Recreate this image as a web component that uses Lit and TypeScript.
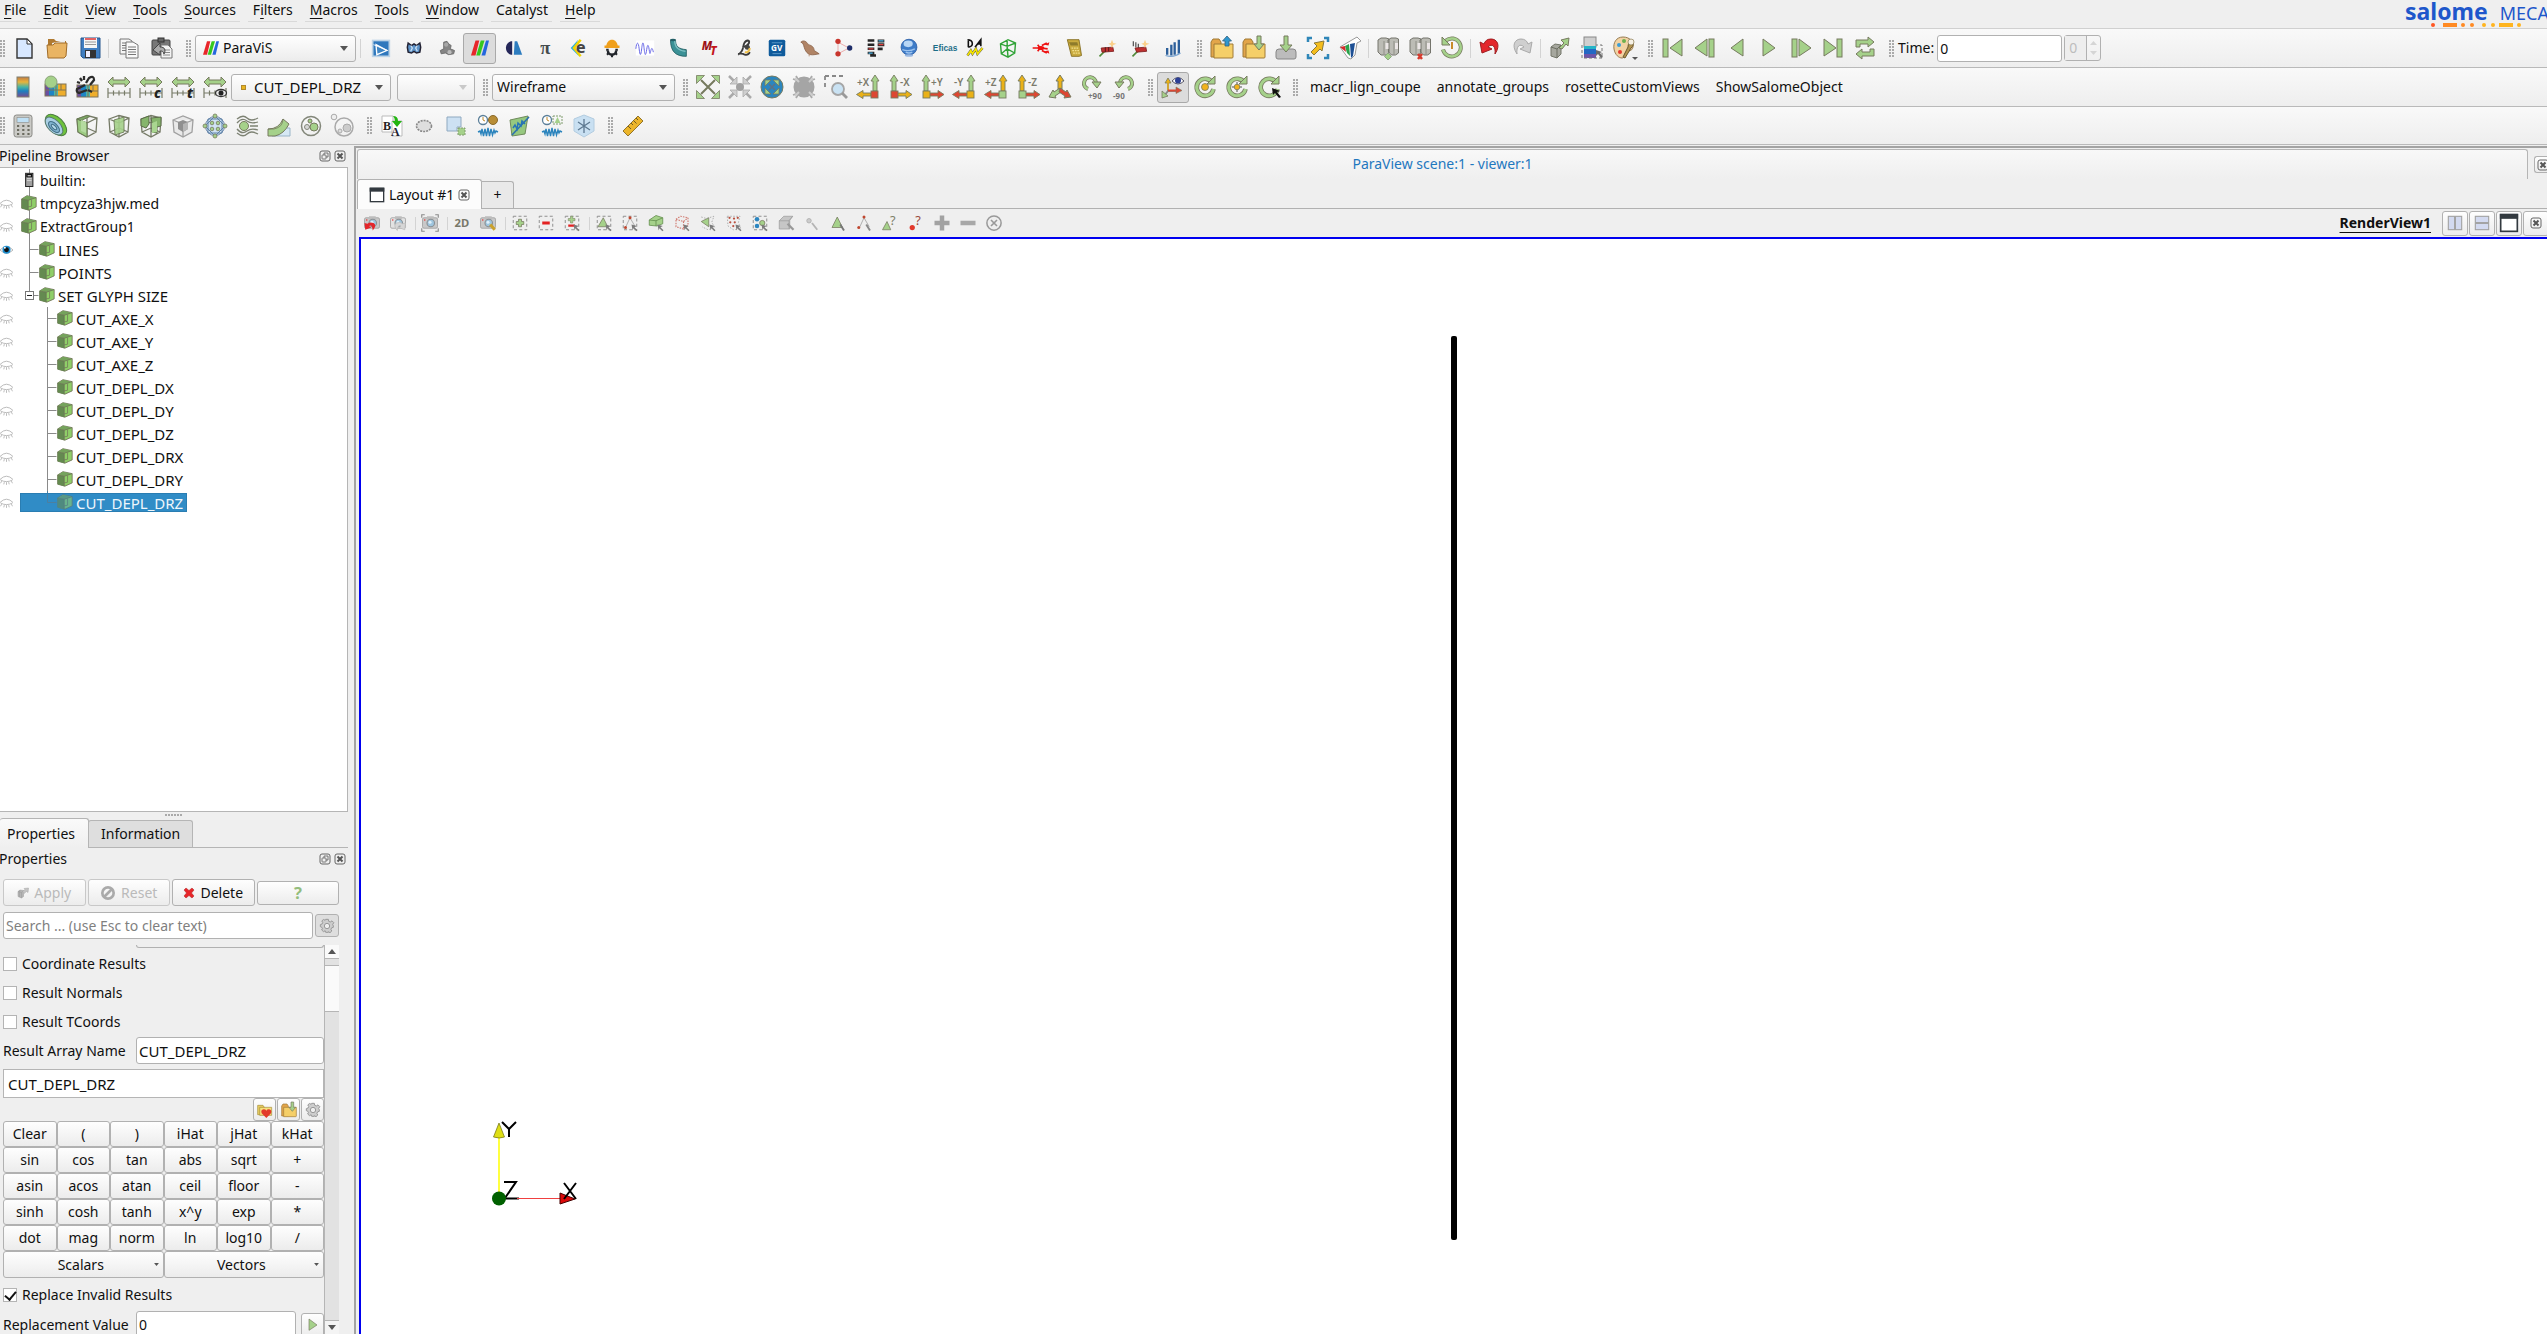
import { LitElement, html, css, svg, nothing } from "lit";
import { customElement } from "lit/decorators.js";
import { classMap } from "lit/directives/class-map.js";

const G = "#a5d18a";
const K = "#767a5f";

/* ---------- shared fragments ---------- */
const dash = svg`<rect x="3" y="3" width="18" height="18" fill="none" stroke="#8d8d8d" stroke-width="1.3" stroke-dasharray="4 3"/>`;
const cursor = svg`<path d="M14 14l7 2-3 1.500 4 4-1.500 1.500-4-4-1 3z" fill="#7b7b7b"/>`;
const arrowRow = svg`<path d="M1 7l5-5v3h12V2l5 5-5 5V9H6v3z" fill="${G}" stroke="${K}"/><path d="M1 13v10M6.500 15.500v5M12 15.500v5M17.500 15.500v5M23 13v10M1 18h22" stroke="#777b68" fill="none" stroke-width="1.200"/>`;
const wave = svg`<path d="M2 18l2-1 1 3 1-5 1.500 7L9 15l1.500 7L12 14l1.500 8L15 15l1.500 6L18 16l1 3 1-2 2 1" fill="none" stroke="#2b84bd" stroke-width="1.400"/>`;
const clock = svg`<circle cx="7" cy="6" r="4.500" fill="#fff" stroke="#5b7f99" stroke-width="1.300"/><path d="M7 3v3l2 1" stroke="#c08a2b" fill="none"/>`;
const boxWire = svg`<path d="M2 5l10-3.500L22 4l-1 14-9 5-9-5zM2 5l10 4 10-5M12 9v14M12 1.500V14M12 14l-9 4M12 14l9 4" fill="none" stroke="#757a66" stroke-width="1.300"/>`;
const camera = (c: string) => svg`<rect x="2" y="5" width="20" height="14" rx="2" fill="${c}" stroke="#9a9a9a"/><rect x="8" y="3" width="9" height="4" fill="#bdbdbd"/><circle cx="13" cy="12" r="5" fill="#9fc6df" stroke="#8a8f93" stroke-width="1.500"/><circle cx="12" cy="11" r="2" fill="#dff0fa"/><circle cx="5" cy="8" r="1" fill="#e33"/>`;
const servers = svg`<path d="M2 4l3-2h5l3 1v14l-3 2H5l-3-3zM12 4l3-2h5l2.500 1v14l-3 2h-4l-3-3z" fill="#bcbcb5" stroke="#74746c"/><path d="M8 5v13M18 5v13" stroke="#8e8e86"/><path d="M9.500 7h3v6h-3zM19 7h3v6h-3z" fill="#ece7e7"/>`;
const lutFace = (y: number) => svg`<path d="M2 ${y}h7v12H2z" fill="#6b4fa0"/><path d="M6 ${y}h6v12H6z" fill="#1e84c4"/><path d="M11 ${y}h4v12h-4z" fill="#4fb6a8"/><path d="M15 ${y}h8v12h-8z" fill="#efae2c"/><rect x="2" y="${y}" width="21" height="12" fill="none" stroke="#7f7357"/><path d="M2 ${y + 6}h21M13 ${y}v12M18 ${y}v6" stroke="#7f7357" fill="none"/>`;
const axis = (label: string, x: number, up: string, side: string, corner: string, left: boolean) => {
  const ux = left ? 19 : 6;
  return svg`<text x="${x}" y="11" font-size="10" font-weight="600" fill="#7b7a6b">${label}</text>
  <path d="M${ux - 2} 16V6h-2l4-6 4 6h-2v10z" fill="${up}" stroke="${K}" stroke-width=".9"/>
  <path d="${left ? "M15 18H7v-2.500l-6.500 4 6.500 4V21h8z" : "M9 18h9v-2.500l6 4-6 4V21H9z"}" fill="${side}" stroke="${K}" stroke-width=".9"/>
  <rect x="${left ? 15 : 3}" y="16" width="7" height="7" fill="${corner}" stroke="${K}" stroke-width=".9"/>`;
};
const RED = "#dd4632", YEL = "#eab117";
const ring = svg`<path d="M19.500 8a8.500 8.500 0 1 0 1 6" fill="none" stroke="${K}" stroke-width="4.600"/><path d="M19.500 8a8.500 8.500 0 1 0 1 6" fill="none" stroke="${G}" stroke-width="3"/><path d="M14 9h8V1z" fill="${G}" stroke="${K}"/>`;
const folder = svg`<path d="M1 6l2-3h6l2 3v15H1z" fill="#e2a54a" stroke="#a07a36"/><path d="M4 8h19v13q0 1-1 1H4z" fill="#f5cf68" stroke="#a07a36"/>`;
const gearPath = "M10 2h4l.6 3 2.300 1 2.600-1.700 2.700 2.700L20.500 9.600l1 2.300V14l-2.500.7-1.200 2.300 1.400 2.500-2.700 2.500-2.500-1.400L14 21.500h-4l-.8-2.400L6.800 20.500 4 18l1.200-2.600L4.300 14 2 13v-3l2.600-1 1-2.200L4.200 4.400 6.800 2.200l2.400 1.300z";

const icons: Record<string, unknown> = {
  newDoc: svg`<path d="M5 3h10l5 5v14H5z" fill="#d8e8ff" stroke="#333" stroke-width="1.400"/><path d="M15 3v5h5z" fill="#fff" stroke="#333"/>`,
  open: svg`<path d="M3 3h6l2 2h10v6H3z" fill="#b07a31"/><path d="M7 7l13-3v5H7z" fill="#eee"/><path d="M2 9h6l2-2h12l-1 13-2 2H3z" fill="#e9b463" stroke="#a06d2a"/>`,
  save: svg`<path d="M3 2h19v20H5l-2-2z" fill="#3f7dc0" stroke="#27568e"/><rect x="6" y="2" width="13" height="10" fill="#f5f5f5"/><path d="M7 3h11" stroke="#d33" stroke-width="1.500"/><path d="M7 6h11M7 8.500h11" stroke="#999"/><rect x="7" y="14" width="11" height="8" fill="#333"/><rect x="8" y="15" width="4" height="6" fill="#eef"/>`,
  copy: svg`<path d="M3 3h9l3 2v13H3z" fill="#f6f6f6" stroke="#777"/><path d="M5 7h5M5 9.500h5M5 12h5M5 14.500h5" stroke="#777"/><path d="M9 6h7l5 3v13H9z" fill="#f9f9f9" stroke="#777"/><path d="M11 11h8M11 13.500h8M11 16h8M11 18.500h8" stroke="#777"/>`,
  paste: svg`<rect x="2" y="4" width="18" height="15" rx="1" fill="#777" stroke="#444"/><rect x="8" y="2" width="6" height="4" fill="#666" stroke="#333"/><path d="M11 9h7l4 4v9H11z" fill="#f3f3f3" stroke="#777"/><path d="M13 14h7M13 16.500h7M13 19h7" stroke="#888"/><path d="M3 14l7-7v4c5 0 6 3 4 7-1-3-2-3-4-3v4z" fill="#aaa" stroke="#444"/>`,
  paravis: svg`<path d="M6 2h5L6 22H0z" fill="#e8262a"/><path d="M13 2h5l-6 20H7z" fill="#35c81e"/><path d="M20 2h4l-5 20h-5z" fill="#2467dd"/>`,
  geom: svg`<rect x="2" y="3" width="20" height="19" fill="#2f78bd" stroke="#bcd3e6" stroke-width="2"/><path d="M6 8l13 7-12 5z" fill="#3f86c4" stroke="#fff" stroke-width="1.600"/><path d="M3 8l17 7" stroke="#fff"/>`,
  butterfly: svg`<path d="M5 6l4 3 3-2 3 2 4-3 1 5-1 6-4 1-3-2-3 2-4-1-1-6z" fill="#5d93c8" stroke="#223" stroke-width="1.800"/><path d="M8 9l2 3-2 4M16 9l-2 3 2 4" stroke="#cfe3f5" fill="none" stroke-width="1.500"/>`,
  mesh: svg`<path d="M8 5l4-1 2 3 3 2-1 4 5 2-1 4-6 1-4-2-5 1-1-4 4-2z" fill="#858585" stroke="#666"/><circle cx="11" cy="8" r="2.500" fill="#a7a7a7"/><circle cx="15" cy="17" r="2.500" fill="#bcbcbc"/>`,
  med: svg`<path d="M11 4v16C1 20 1 4 11 4z" fill="#252759"/><path d="M14 4h3l6 16H13z" fill="#2d7cbf"/>`,
  pi: svg`<text x="5" y="19" font-size="22" font-weight="700" font-family="Liberation Serif, serif" fill="#454b4d">π</text>`,
  eCode: svg`<path d="M11 2L2 12l10 10-5-10z" fill="#29aee0"/><path d="M14 2L6 12l8 10" stroke="#f2d400" stroke-width="3" fill="none"/><text x="8" y="18" font-size="20" font-weight="700" fill="#444">e</text>`,
  helmet: svg`<path d="M5 11C5-1 19-1 19 11z" fill="#f0a01c"/><rect x="3" y="9" width="18" height="3" fill="#f0a01c"/><path d="M7 15a5 5 0 0 0 10 0" fill="none" stroke="#22252b" stroke-width="3"/><path d="M5 14h3M16 14h3M12 19v4M6 20l2-2M18 20l-2-2" stroke="#22252b" stroke-width="2.500"/>`,
  signal: svg`<rect x="1" y="3" width="22" height="18" fill="#fff"/><path d="M1 13c1-9 3-9 4 0s2 9 3 0 2-10 3 0 2 8 3 1 2-7 3 0 1 5 2 1 2-3 3 2" fill="none" stroke="#6b6be8" stroke-width="1.200"/>`,
  pipe: svg`<path d="M3 2h6c0 8 3 11 13 12v8C9 22 3 16 3 2z" fill="#3b9196" stroke="#1f5c60"/><path d="M8 3c0 8 4 12 13 13" stroke="#7fc0c2" stroke-width="1.500" fill="none"/><ellipse cx="6" cy="2.500" rx="3" ry="1.500" fill="#245f66"/>`,
  mt: svg`<text x="1" y="14" font-size="14" font-weight="800" font-style="italic" fill="#9d1217">M</text><text x="11" y="20" font-size="14" font-weight="800" font-style="italic" fill="#c4161c">T</text>`,
  lCode: svg`<path d="M5 20q5-3 6-9 1-7 5-8 3 0 2 3-2 4-8 5M5 19q5-1 8 1 4 1 6-3" fill="none" stroke="#3b3b3b" stroke-width="2.200"/><circle cx="16" cy="11" r="3" fill="#444"/><path d="M13 17q5 1 6-5" stroke="#efc04a" stroke-width="2.500" fill="none"/>`,
  gv: svg`<rect x="1" y="1" width="22" height="22" rx="2" fill="#0f5b9c"/><text x="4" y="16" font-size="11" font-weight="700" fill="#fff">GV</text><path d="M5 5h14M6 19.500h12" stroke="#6ea7d3"/>`,
  bird: svg`<path d="M1 5c3-3 7-1 9 3 5 1 7 4 7 7l6 4-6 1c-6 1-10-2-12-9-1-3-1-5-4-6z" fill="#b08466" stroke="#8b644a"/><path d="M11 18v4" stroke="#b08466"/>`,
  graph: svg`<path d="M6 5v14M6 5l13 7L6 19" stroke="#e8a0a0" fill="none"/><circle cx="6" cy="4" r="3.200" fill="#c8352c"/><circle cx="6" cy="19" r="3.200" fill="#c8352c"/><circle cx="20" cy="12" r="3.200" fill="#1d2d69"/>`,
  yacs: svg`<path d="M2 3h8M2 8h8M2 13h8M2 18h8M5 21h7" stroke="#262626" stroke-width="3"/><path d="M14 3.500h8M14 8h8M14 13h6" stroke="#262626" stroke-width="3.500"/><path d="M15 3.500h6M3 18h5" stroke="#4cb4e8" stroke-width="1.500"/><path d="M15 8h6M3 13h6" stroke="#e04040" stroke-width="1.500"/>`,
  globe: svg`<circle cx="12" cy="11" r="9.500" fill="#3e7cc8" stroke="#2b5ea6"/><ellipse cx="11" cy="7" rx="5.500" ry="4" fill="#b8d6f5"/><path d="M4 14q8 3 15-1M8 17q4 2 8 0" stroke="#9cc3ee" fill="none" stroke-width="1.500"/><ellipse cx="12" cy="21" rx="5" ry="1.500" fill="#9ab9e2"/>`,
  eficas: svg`<text x="1" y="16" font-size="10" font-weight="700" font-family="Liberation Sans Narrow, sans-serif" fill="#1d6e88">Eficas</text>`,
  da: svg`<path d="M3 2c7 0 8 8 1 9M4 2v9M12 11l7-9v8M15 7h4" fill="none" stroke="#111" stroke-width="1.900"/><path d="M3 21l4-6 2 4 4-6 2 6 6-7" stroke="#555" stroke-width="3" fill="none"/><path d="M3 21l4-6 2 4 4-6 2 6 6-7" stroke="#f5e500" stroke-width="2" fill="none"/>`,
  cube: svg`<path d="M3 7l9-5 9 4-1 12-8 5-8-4zM3 7l8 3 10-4M11 10l1 13M4 19l7-6 9 5M11 2v11" fill="none" stroke="#2fa336" stroke-width="1.700"/>`,
  lobster: svg`<path d="M2 12h10l8 1M13 9l6-3M13 15l6 3M8 8l3 4-3 4" stroke="#ee1111" stroke-width="2" fill="none"/><ellipse cx="12" cy="12" rx="4" ry="2.500" fill="#ee1111"/><path d="M16 8l6-3-1 4zM16 16l6 3-1-4z" fill="#ee1111"/>`,
  goldCalc: svg`<path d="M4 2h14l3 19-3 1H9z" fill="#c9ab3f" stroke="#806818"/><path d="M6 5h10l1 4H8z" fill="#8e7b2b"/><path d="M9 12h9M10 15h9M11 18h8" stroke="#f2e08c" stroke-width="1.500" stroke-dasharray="2 1"/>`,
  hammer: svg`<path d="M3 22l6-6" stroke="#4f8a3a" stroke-width="2"/><path d="M5 12l14-1 1 5-14 1z" fill="#be3030" stroke="#7d1e1e"/><path d="M10 11v6M14 11v5" stroke="#421515"/><path d="M18 2l1.500 4 4 1-4 1.500L18 12l-1.500-3.500-3-1.500 3-1z" fill="#fbd08a"/>`,
  hammer2: svg`<path d="M3 22l6-6" stroke="#4f8a3a" stroke-width="2"/><path d="M4 4v6M7 5v6M10 7v6" stroke="#555" stroke-width="1.500"/><path d="M6 12l13-1 1 5-12 1z" fill="#be3030" stroke="#7d1e1e"/><path d="M18 2l1.500 4 4 1-4 1.500L18 12l-1.500-3.500-3-1.500 3-1z" fill="#fbd08a"/>`,
  bars: svg`<path d="M5 12v8M10 8v13M14 5v15M19 2v17" stroke="#2c5f9a" stroke-width="2.800"/><path d="M3 21q10 3 18-3" stroke="#7aa4d0" fill="none" stroke-width="1.500"/>`,
  folderUp: svg`${folder}<path d="M17 0l4.500 5H19v5h-4V5h-2.500z" fill="#2f97cf" stroke="#33617e" stroke-width=".8"/>`,
  folderDown: svg`${folder}<path d="M15 0h4v8h3l-5 6-5-6h3z" fill="${G}" stroke="${K}"/>`,
  tray: svg`<path d="M2 16q0-3 3-3h14q3 0 3 3v5q0 2-2 2H4q-2 0-2-2z" fill="#bcbcbc" stroke="#868686"/><path d="M10 0h4v9h4l-6 7-6-7h4z" fill="${G}" stroke="${K}"/>`,
  expand: svg`<path d="M2 6V2h4M18 2h4v4M22 18v4h-4M6 22H2v-4" fill="none" stroke="#2f86b8" stroke-width="2.500"/><path d="M5 16l6-6-3-3 10-2-2 10-2-2-6 6z" fill="#f4bd1d" stroke="#8b7a3c"/>`,
  flask: svg`<path d="M2 11L19 1l4 4-4 2-2 12-4 4-3-1z" fill="#fff" stroke="#999"/><path d="M2 11l5-1 1 6z" fill="#d42a2a"/><path d="M7 10l4-2 1 12-3-3z" fill="#2aa14a"/><path d="M12 8l5-1-2 13-2 2z" fill="#1d4f94"/>`,
  connect: svg`${servers}<path d="M12 17l3.500 3.500L12 24l-3.500-3.500z" fill="${G}" stroke="#8ea883"/>`,
  disconnect: svg`${servers}<path d="M10 18l4 5M14 18l-4 5" stroke="#d63a2d" stroke-width="2.500"/>`,
  timeReset: svg`<path d="M6 4.500a9 9 0 1 1-3 9" fill="none" stroke="${K}" stroke-width="4"/><path d="M6 4.500a9 9 0 1 1-3 9" fill="none" stroke="${G}" stroke-width="2.500"/><path d="M2 1v8h8z" fill="${G}" stroke="${K}"/><path d="M12 6v7" stroke="#c98a2a" stroke-width="2"/>`,
  undo: svg`<path d="M2 6l2 11 10-4-4-2c4-4 8-1 7 7 6-9 2-15-4-15-4 0-6 2-7 5z" fill="#e3262b" stroke="#9f1d20"/>`,
  redo: svg`<path d="M22 6l-2 11-10-4 4-2c-4-4-8-1-7 7C1 9 5 3 11 3c4 0 6 2 7 5z" fill="#cfcfcf" stroke="#aaa"/>`,
  extract: svg`<path d="M3 11l4-3 6 1v9l-4 4-6-2z" fill="#a6a79e" stroke="#74776a"/><path d="M3 11l6 2v9M9 13l4-4" fill="none" stroke="#6c6f63"/><path d="M11 12l5-5-3-3 8-2-1 8-2-2-4 5z" fill="${G}" stroke="${K}"/>`,
  colorPick: svg`<rect x="4" y="1" width="12" height="10" fill="#cfcfcf" stroke="#888"/><rect x="4" y="10" width="12" height="4" fill="#25b4c6"/><rect x="4" y="13" width="12" height="5" fill="#2368c4"/><rect x="4" y="18" width="12" height="4" fill="#6d55a8"/><path d="M2 9v13h20V9H16" stroke="#777" stroke-dasharray="3 2" fill="none"/><path d="M16 14l6 2-2 1 3 4-2 1-3-4-2 2z" fill="#6b6b6b"/>`,
  palette: svg`<path d="M11 1C4 1 1 7 2 13s5 9 8 9 2-4 4-6 6 0 7-5S18 1 11 1z" fill="#f2d3a4" stroke="#957b52"/><circle cx="7" cy="9" r="2" fill="#3c9ed6"/><circle cx="12" cy="5" r="2" fill="#6db04e"/><circle cx="8" cy="16" r="2" fill="#e4392d"/><path d="M20 5q3 4-1 7l-6 10-2-1 5-10q-1-4 4-6z" fill="#b3934f" stroke="#6d5a30"/><circle cx="19" cy="6" r="3" fill="#f6f1e5" stroke="#8b7a50" stroke-width=".7"/><path d="M20 21h6l-3 3z" fill="#555"/>`,
  first: svg`<rect x="2" y="3" width="5" height="18" fill="${G}" stroke="${K}"/><path d="M21 3v17L9 12z" fill="${G}" stroke="${K}"/>`,
  prev: svg`<path d="M14 3v17L2 12z" fill="${G}" stroke="${K}"/><rect x="16" y="3" width="5" height="18" fill="${G}" stroke="${K}"/>`,
  back: svg`<path d="M18 3v17L6 12z" fill="${G}" stroke="${K}"/>`,
  play: svg`<path d="M6 3v17l12-8z" fill="${G}" stroke="${K}"/>`,
  next: svg`<rect x="3" y="3" width="5" height="18" fill="${G}" stroke="${K}"/><path d="M10 3v17l12-8z" fill="${G}" stroke="${K}"/>`,
  last: svg`<path d="M3 3v17l12-8z" fill="${G}" stroke="${K}"/><rect x="16" y="3" width="5" height="18" fill="${G}" stroke="${K}"/>`,
  loop: svg`<path d="M3 11V4h12V1l6 5-6 5V8H7v3zM21 13v7H9v3l-6-5 6-5v3h8v-3z" fill="${G}" stroke="${K}"/>`,
  lut: svg`<defs><linearGradient id="lut" x2="0" y2="1"><stop offset="0" stop-color="#c07a45"/><stop offset=".25" stop-color="#e8b43a"/><stop offset=".5" stop-color="#45b5a5"/><stop offset=".7" stop-color="#1c7fc0"/><stop offset="1" stop-color="#7a4b90"/></linearGradient></defs><rect x="6" y="2" width="12" height="20" fill="url(#lut)" stroke="#7f8070"/>`,
  lutEdit: svg`${lutFace(9)}<circle cx="8" cy="7" r="6" fill="${G}" stroke="#8aa378"/>`,
  lutSep: svg`${lutFace(10)}<path d="M11 8l3-5q5-3 5 2l-4 5M10 10l-8 4q-1 3 2 4l8-3M5 3l2 3M2 7l3 1M9 1v4M13 15l4 2" stroke="#2b2b2b" fill="none" stroke-width="2.300"/>`,
  range: arrowRow,
  rangeC: svg`${arrowRow}<text x="15" y="23" font-size="14" font-weight="800" font-style="italic" fill="#222">c</text>`,
  rangeT: svg`${arrowRow}<text x="16" y="23" font-size="14" font-weight="800" font-style="italic" fill="#222">t</text>`,
  rangeEye: svg`${arrowRow}<ellipse cx="18" cy="18" rx="5.500" ry="3.500" fill="#e8e8e8" stroke="#333" stroke-width="1.300"/><circle cx="18" cy="18" r="2.500" fill="#222"/>`,
  resetCam: svg`<path d="M5 5l14 14M19 5L5 19" stroke="${K}" stroke-width="2"/><path d="M.5.5h8l-8 8zM23.500.5h-8l8 8zM.5 23.500h8l-8-8zM23.500 23.500h-8l8-8z" fill="${G}" stroke="${K}" stroke-width=".8"/>`,
  resetCamData: svg`<path d="M1 1l5 5M23 1l-5 5M1 23l5-5M23 23l-5-5" stroke="#aaa" stroke-width="2.500"/><path d="M9 9H2l2-2 3-3 2-2zM15 9h7l-7-7zM9 15H2l7 7zM15 15h7l-7 7z" fill="#cfcfcf" stroke="#aaa" stroke-width=".8"/><circle cx="12" cy="12" r="4" fill="#a0a0a0"/>`,
  zoomBall: svg`<circle cx="12" cy="12" r="11" fill="#2b86bf" stroke="${K}"/><path d="M9 9l6 6M15 9l-6 6" stroke="#5c7286" stroke-width="1.500"/><path d="M5 5h6l-6 6zM19 5h-6l6 6zM5 19h6l-6-6zM19 19h-6l6-6z" fill="${G}" stroke="${K}" stroke-width=".8"/>`,
  zoomGrey: svg`<path d="M1 4l6 2M4 1l3 5M23 4l-6 2M20 1l-3 5M1 20l6-2M4 23l3-5M23 20l-6-2M20 23l-3-5" stroke="#aaa" stroke-width="1.800"/><circle cx="12" cy="12" r="10.500" fill="#a5a5a5"/><path d="M3 3l4 4M21 3l-4 4M3 21l4-4M21 21l-4-4" stroke="#cdcdcd" stroke-width="2"/>`,
  zoomBox: svg`<path d="M1 1h18M1 1v14" stroke="#888" stroke-width="1.800" stroke-dasharray="4 3" fill="none"/><circle cx="14" cy="14" r="6" fill="#c9e2f3" stroke="#a5a5a5" stroke-width="1.800"/><path d="M18 18l5 5" stroke="#999" stroke-width="2.800"/>`,
  px: axis("+X", 1, G, YEL, RED, true),
  mx: axis("-X", 12, G, YEL, RED, false),
  py: axis("+Y", 11, G, RED, YEL, false),
  my: axis("-Y", 2, G, RED, YEL, true),
  pz: axis("+Z", 1, YEL, RED, G, true),
  mz: axis("-Z", 12, YEL, RED, G, false),
  iso: svg`<path d="M10 14V6H8l4-6 4 6h-2v8z" fill="${YEL}" stroke="${K}"/><path d="M12 13l-6 4-1-2-4 7 7 1-1-2 6-4z" fill="${G}" stroke="${K}"/><path d="M12 13l6 4 1-2 4 7-7 1 1-2-6-4z" fill="${RED}" stroke="${K}"/>`,
  rotP: svg`<path d="M8 14a6 6 0 1 1 8-6" fill="none" stroke="${K}" stroke-width="4"/><path d="M8 14a6 6 0 1 1 8-6" fill="none" stroke="${G}" stroke-width="2.500"/><path d="M12 7h9l-4 6z" fill="${G}" stroke="${K}"/><text x="8" y="24" font-size="8" font-weight="700" fill="#777">+90</text>`,
  rotM: svg`<path d="M16 14a6 6 0 1 0-8-6" fill="none" stroke="${K}" stroke-width="4"/><path d="M16 14a6 6 0 1 0-8-6" fill="none" stroke="${G}" stroke-width="2.500"/><path d="M12 7H3l4 6z" fill="${G}" stroke="${K}"/><text x="1" y="24" font-size="8" font-weight="700" fill="#777">-90</text>`,
  orient: svg`<path d="M7 16V5M7 16h10M7 16l-4 5" stroke="#888" stroke-width="2"/><path d="M4 8l3-5 3 5z" fill="${YEL}" stroke="${K}" stroke-width=".8"/><path d="M7 7v8" stroke="${YEL}" stroke-width="1.500"/><path d="M7 15.500h8" stroke="${RED}" stroke-width="2"/><path d="M15 12l6 3.500-6 3z" fill="${RED}" stroke="${K}" stroke-width=".6"/><path d="M1 16v7l6-2z" fill="${G}" stroke="${K}" stroke-width=".8"/><path d="M11 6q6-7 12 0-6 6-12 0z" fill="#fff" stroke="#556"/><circle cx="17" cy="5.500" r="3" fill="#2c3f94"/>`,
  center1: svg`${ring}<circle cx="12" cy="12" r="3.500" fill="#f2b21b" stroke="${K}" stroke-width=".8"/>`,
  center2: svg`${ring}<path d="M12 7v10M7 12h10" stroke="#888" stroke-width="1.500"/><circle cx="12" cy="12" r="2.800" fill="#f2b21b" stroke="${K}" stroke-width=".8"/>`,
  center3: svg`${ring}<path d="M15 13l8 3-3 1 4 5-2 1-4-5-2 2z" fill="#111"/>`,
  calc: svg`<rect x="3" y="1" width="18" height="22" rx="2.500" fill="#cacac6" stroke="#8a8a86"/><rect x="6" y="3.500" width="12" height="5" fill="#bfe0f5" stroke="#8a8a86" stroke-width=".6"/><path d="M6 12h13M6 16h13M6 20h13" stroke="#6b6b60" stroke-width="2.200" stroke-dasharray="2.200 3"/>`,
  contour: svg`<ellipse cx="13" cy="11" rx="13" ry="7.500" transform="rotate(45 13 11)" fill="#6fc33c" stroke="#4c7d40"/><ellipse cx="11" cy="12" rx="11" ry="6" transform="rotate(45 11 12)" fill="#a9cfe4" stroke="#587a70"/><ellipse cx="11" cy="13" rx="7" ry="3.500" transform="rotate(45 11 13)" fill="#7fb2cf" stroke="#447088"/><ellipse cx="11" cy="13" rx="3.500" ry="1.500" transform="rotate(45 11 13)" fill="#b8dcec" stroke="#447088"/>`,
  clip: svg`${boxWire}<path d="M2 5l10 4v14l-9-5z" fill="#9ccb82" stroke="#6b7d55"/><path d="M2 5l10-3.500 3 1-9 4z" fill="#7da867" stroke="#6b7d55"/><path d="M6 6l5 2v11l-5-2z" fill="#b5dba0"/>`,
  slice: svg`${boxWire}<path d="M7 6l10-3v15l-9 3z" fill="${G}" stroke="#6b7d55" opacity=".9"/>`,
  threshold: svg`${boxWire}<path d="M2 5l8-3v8l-3 4-5-2zM12 4l10-1v9l-4 1v6l-5-1V9z" fill="#86b56c" stroke="#5b6b49"/><path d="M13 9l5-2v11l-5 1z" fill="#a9d690"/>`,
  subset: svg`<path d="M2 6l10-4 10 4-1 12-9 5-9-5zM2 6l10 4 10-4M12 10v13" fill="#e9e9e9" stroke="#a0a0a0" stroke-width="1.300"/><path d="M7 8l5-2 5 2v7l-5 3-5-3z" fill="#8f8f8f"/><path d="M12 10l5-2v7l-5 3z" fill="#b5b5b5"/>`,
  glyph: svg`<circle cx="12" cy="12" r="9.500" fill="#cfe2f3" stroke="#6a84a8"/><path d="M5 5h14v14H5zM12 2L2 12l10 10 10-10z" stroke="#5f82a8" fill="none"/><g fill="${G}" stroke="${K}" stroke-width=".8"><circle cx="12" cy="2" r="2"/><circle cx="12" cy="22" r="2"/><circle cx="2" cy="12" r="2"/><circle cx="22" cy="12" r="2"/><circle cx="9" cy="9" r="1.800"/><circle cx="15" cy="9" r="1.800"/><circle cx="9" cy="15" r="1.800"/><circle cx="15" cy="15" r="1.800"/></g>`,
  stream: svg`<path d="M2 5q6-5 10-1t11 0M2 9q5-6 10-2 4 3 11 1M2 19q6 5 10 1t11 0M2 15q5 6 10 2 4-3 11-1M15 12h8" stroke="#7d8273" fill="none" stroke-width="1.300"/><circle cx="9" cy="12" r="4.500" fill="${G}" stroke="${K}"/>`,
  warp: svg`<path d="M9 14h14v8H5z" fill="#d6e8f4" stroke="#9ab5c8"/><path d="M1 15q11 0 15-10l6 5q-5 10-14 12H1z" fill="${G}" stroke="${K}"/><path d="M1 15h6q9-2 9-10" fill="none" stroke="${K}" stroke-width=".8"/>`,
  group: svg`<circle cx="12" cy="12" r="9.500" fill="none" stroke="#83877a" stroke-width="1.500"/><circle cx="8" cy="13" r="2.500" fill="#d6d6d6" stroke="#83877a"/><circle cx="15" cy="13" r="4" fill="${G}" stroke="${K}"/><circle cx="11" cy="7" r="2" fill="${G}" stroke="${K}"/>`,
  extractBlock: svg`<circle cx="3" cy="3" r="2.800" fill="#eee" stroke="#aaa"/><circle cx="13" cy="13" r="9" fill="none" stroke="#aaa" stroke-width="1.500"/><circle cx="16" cy="14" r="4" fill="#ccc" stroke="#aaa"/><circle cx="9" cy="17" r="2" fill="#ddd" stroke="#aaa"/>`,
  ba: svg`<path d="M2 2h11v16H2z" fill="#fff" stroke="#bbb"/><path d="M12 7h10v15H12z" fill="#fff" stroke="#bbb"/><text x="3" y="16" font-size="12" font-weight="700" font-family="Liberation Serif, serif" fill="#222">B</text><text x="11" y="22" font-size="12" font-weight="700" font-family="Liberation Serif, serif" fill="#223">A</text><path d="M13 2q5 0 5 5h4l-5 6-5-6h3q0-3-2-5z" fill="#23b513"/>`,
  oval: svg`<ellipse cx="12" cy="12" rx="7.500" ry="5.500" fill="#dedede" stroke="#888" stroke-width="1.600" stroke-dasharray="2 1"/>`,
  squares: svg`<path d="M3 3h14v10h-4v4H3z" fill="#cde1f3" stroke="#8fa9c0"/><rect x="14" y="14" width="7" height="7" fill="${G}" stroke="#7f9a6c" stroke-dasharray="2 1"/>`,
  plotTime: svg`${clock}<circle cx="17" cy="6" r="4.500" fill="#b88d36" stroke="#8a6a2b"/>${wave}`,
  plotLine: svg`<path d="M2 6l18-4-3 18-13 2z" fill="#96c87f" stroke="#6f8a5c"/><path d="M4 21L21 3" stroke="#2b6fb0" stroke-width="1.500"/><path d="M5 14l2-3 2 4 1-6 3 3 1-5 3 3" stroke="#2674b8" fill="none" stroke-width="1.500"/>`,
  plotSel: svg`${clock}<rect x="13" y="2" width="9" height="8" fill="none" stroke="#7f9a6c" stroke-dasharray="2 1"/><path d="M17.500 3l3 6h-6z" fill="${G}"/>${wave}`,
  snow: svg`<path d="M2 5l10-4 10 4v12l-10 6-10-6z" fill="#c9e0f2" stroke="#b2cce0"/><path d="M12 5v14M6 8l12 8M18 8L6 16" stroke="#5d7890" stroke-width="1.300"/>`,
  ruler: svg`<path d="M2 17L17 2l5 5L7 22z" fill="#ecb52a" stroke="#93752a"/><path d="M7 12l3 3M10 9l2 2M12.500 6.500l3 3M15 4l2 2" stroke="#6f5a22"/>`,
  camUndo: svg`${camera("#c8c8c8")}<path d="M2 12l1 9 8-3-3-2q4-3 5 6 6-7 1-10-5-2-8 1z" fill="#e3262b"/>`,
  camRedo: svg`${camera("#e2e2e2")}<path d="M22 12l-1 9-8-3 3-2q-4-3-5 6-6-7-1-10 5-2 8 1z" fill="#d6d6d6" stroke="#bbb"/>`,
  capture: svg`${camera("#c8c8c8")}<path d="M1 5V1h4M19 1h4v4M23 19v4h-4M5 23H1v-4" stroke="#8a8a8a" fill="none" stroke-width="1.500"/>`,
  two: svg`<text x="2" y="17" font-size="15" font-weight="700" fill="#78786a">2D</text>`,
  camZoom: svg`${camera("#c8c8c8")}<path d="M15 14l6 7" stroke="#caa12d" stroke-width="4"/>`,
  selAdd: svg`${dash}<path d="M10 7h4v3h3v4h-3v3h-4v-3H7v-4h3z" fill="${G}" stroke="${K}"/>`,
  selSub: svg`${dash}<rect x="7" y="10" width="10" height="4" fill="#e32222"/>`,
  selToggle: svg`${dash}<path d="M10 3h3v3h3v3h-3v3h-3V9H7V6h3z" fill="${G}" stroke="${K}" stroke-width=".7"/><rect x="7" y="14" width="9" height="3" fill="#e32222"/>${cursor}`,
  selCells: svg`${dash}<path d="M11 5l6 12H4z" fill="${G}" stroke="${K}"/>${cursor}`,
  selPoints: svg`${dash}<path d="M12 5L6 18M12 5l7 12" stroke="#999"/><circle cx="12" cy="5" r="2" fill="#c0472f"/><circle cx="6" cy="18" r="2" fill="#c0472f"/>${cursor}`,
  frustCells: svg`<path d="M3 8l9-6 9 3v8l-8 3-10-1z" fill="${G}" stroke="#5e8a48"/><path d="M3 8l9 1 9-4M12 9v7" stroke="#5e8a48" fill="none"/>${cursor}`,
  frustPts: svg`<path d="M4 7l6-4 10 2v10l-6 5-10-3zM4 7l10 3 6-5M14 10v9" fill="none" stroke="#d07a70" stroke-width="1.500" stroke-dasharray="2 1.500"/>${cursor}`,
  polyCells: svg`<path d="M3 10l10-5v12z" fill="${G}" stroke="${K}"/><path d="M3 4l7 2 10-3-3 8 4 7-9 3-8-4" fill="none" stroke="#999" stroke-dasharray="2 2"/>${cursor}`,
  polyPts: svg`<path d="M3 3h17l-2 8 3 9-10 1-7-5z" fill="none" stroke="#999" stroke-dasharray="2 2"/><g fill="#b9503f"><circle cx="6" cy="5" r="1.500"/><circle cx="12" cy="6" r="1.500"/><circle cx="17" cy="5" r="1.500"/><circle cx="7" cy="11" r="1.500"/><circle cx="13" cy="11" r="1.500"/><circle cx="11" cy="16" r="1.500"/></g>${cursor}`,
  blocks: svg`${dash}<circle cx="8" cy="7" r="3" fill="#2c86c0"/><circle cx="8" cy="16" r="3" fill="#2c86c0"/><circle cx="15" cy="12" r="3.500" fill="${G}" stroke="${K}"/>${cursor}`,
  blockGrey: svg`<path d="M3 9l6-6h12l-4 5v12H3z" fill="#c6c6c6" stroke="#9e9e9e"/><path d="M3 9h13l5-6M16 9v11" fill="none" stroke="#9e9e9e"/><path d="M14 13l8 8" stroke="#999" stroke-width="3"/>`,
  hovPoint: svg`<circle cx="8" cy="9" r="3" fill="#ccc" stroke="#aaa"/><path d="M12 12l7 9" stroke="#b5b5b5" stroke-width="2.500"/>`,
  hovCell: svg`<path d="M11 4l7 14H4z" fill="${G}" stroke="${K}"/><path d="M15 14l5 8" stroke="#777" stroke-width="2.500"/>`,
  hovPts: svg`<path d="M12 5L6 18M12 5l7 12" stroke="#999"/><circle cx="12" cy="4" r="2" fill="#c0472f"/><circle cx="5" cy="18" r="2" fill="#c0472f"/><path d="M15 14l5 8" stroke="#888" stroke-width="2.500"/>`,
  qCell: svg`<path d="M8 10l5 11H2z" fill="${G}" stroke="${K}"/><text x="12" y="15" font-size="17" fill="#7d8068">?</text>`,
  qPoint: svg`<circle cx="7" cy="18" r="3.500" fill="#e2382b"/><text x="11" y="15" font-size="17" fill="#9a4b3d">?</text>`,
  plus: svg`<path d="M9 2h6v7h7v6h-7v7H9v-7H2V9h7z" fill="#a2a2a2"/>`,
  minus: svg`<rect x="2" y="9" width="20" height="6" fill="#a8a8a8"/>`,
  clear: svg`<circle cx="12" cy="12" r="9.500" fill="#eee" stroke="#999" stroke-width="2"/><path d="M8 8l8 8M16 8l-8 8" stroke="#999" stroke-width="2.200"/>`,
  window: svg`<rect x="2" y="2" width="20" height="20" fill="#fff" stroke="#333a40" stroke-width="2"/><rect x="1" y="1" width="22" height="6" fill="#333a40"/>`,
  splitV: svg`<rect x="2" y="2" width="20" height="20" fill="#d3daf0" stroke="#a3a3a3" stroke-width="1.700"/><path d="M12 2v20" stroke="#a3a3a3" stroke-width="3"/>`,
  splitH: svg`<rect x="2" y="2" width="20" height="20" fill="#d3daf0" stroke="#a3a3a3" stroke-width="1.700"/><path d="M2 12h20" stroke="#a3a3a3" stroke-width="3"/>`,
  closeBox: svg`<rect x="2" y="2" width="20" height="20" rx="4" fill="none" stroke="#666" stroke-width="2"/><path d="M7 7l10 10M17 7L7 17" stroke="#555" stroke-width="4"/>`,
  floatBox: svg`<rect x="2" y="2" width="20" height="20" rx="4" fill="none" stroke="#666" stroke-width="2"/><rect x="6" y="10" width="8" height="8" rx="1" fill="none" stroke="#666" stroke-width="1.800"/><path d="M10 10V6h8v8h-4" fill="none" stroke="#666" stroke-width="1.800"/>`,
  server: svg`<rect x="7" y="2" width="11" height="20" fill="#a0a0a0" stroke="#222" stroke-width="1.500"/><rect x="8" y="3" width="9" height="5" fill="#111"/><rect x="10" y="5" width="5" height="1.500" fill="#fff"/><path d="M9 10h7M9 13h7" stroke="#eee"/>`,
  box: svg`<path d="M1 6L9 1l14 3v14l-11 5-11-3z" fill="#8fce68" stroke="#6d6a55" stroke-width="1.200"/><path d="M1 6l10 2v15l-10-3z" fill="#648a50"/><path d="M1 6l8-5 14 3-12 4z" fill="#75a35c"/><path d="M1 6l10 2 12-4M11 8v15M16 7v10l-5 1" fill="none" stroke="#6d6a55"/>`,
  eyeOff: svg`<path d="M0 11q12-12 24 0M1 12q11 6 22 0M3 14l-2 4M8 16l-1 4M12 16v5M16 16l1 4M21 14l2 4" fill="none" stroke="#a6a6a6" stroke-width="1.400"/>`,
  eyeOn: svg`<path d="M0 12Q12-1 24 12 12 24 0 12z" fill="#fff" stroke="#999" stroke-width="1.300"/><circle cx="12" cy="11.500" r="7.500" fill="#1f8fd0"/><circle cx="12" cy="11.500" r="4.500" fill="#111"/><circle cx="9" cy="8" r="1.800" fill="#fff"/>`,
  apply: svg`<path d="M2 9l4-3 7 1v12l-4 3-7-3z" fill="#b5b5b5" stroke="#999"/><path d="M2 9l7 2v11M9 11l4-4M5 7v13" stroke="#999" fill="none"/><path d="M11 9l5-4-2-2 9-1-1 9-3-2-5 4z" fill="#c4c4c4" stroke="#a5a5a5"/>`,
  reset: svg`<circle cx="12" cy="12" r="8.500" fill="none" stroke="#aaa" stroke-width="4"/><path d="M18 6L6 18" stroke="#aaa" stroke-width="4"/>`,
  cross: svg`<path d="M6 2l6 5 6-5 4 4-5 6 5 6-4 4-6-5-6 5-4-4 5-6-5-6z" fill="#e8262a" stroke="#a22"/>`,
  help: svg`<text x="6" y="21" font-size="25" font-weight="700" fill="#93bd7c">?</text>`,
  gear: svg`<path d="${gearPath}" fill="#cdcdcd" stroke="#999" stroke-width="1.500"/><circle cx="12" cy="12" r="4" fill="#eee" stroke="#999" stroke-width="1.500"/>`,
  favs: svg`<path d="M1 5h8l2 3v11H1z" fill="#e9cf62" stroke="#a58c36"/><path d="M4 8h18v12H4z" fill="#f6df7c" stroke="#a58c36"/><path d="M14 24l-7-7q-2-5 3-6 3 0 4 2 1-2 4-2 5 1 3 6z" fill="#e23a2a"/>`,
};

type Item = string | { kind: "sep" | "grip" };
const sep: Item = { kind: "sep" };
const grip: Item = { kind: "grip" };

const modules = ["geom", "butterfly", "mesh", "paravis", "med", "pi", "eCode", "helmet", "signal", "pipe", "mt", "lCode", "gv", "bird", "graph", "yacs", "globe", "eficas", "da", "cube", "lobster", "goldCalc", "hammer", "hammer2", "bars"];
const mainTools: Item[] = ["folderUp", "folderDown", "tray", "expand", "flask", sep, "connect", "disconnect", "timeReset", sep, "undo", "redo", sep, "extract", "colorPick", "palette", grip, "first", "prev", "back", "play", "next", "last", "loop", grip];
const colorTools: Item[] = ["lut", "lutEdit", "lutSep", "range", "rangeC", "rangeT", "rangeEye"];
const cameraTools: Item[] = [grip, "resetCam", "resetCamData", "zoomBall", "zoomGrey", "zoomBox", "px", "mx", "py", "my", "pz", "mz", "iso", "rotP", "rotM", grip, "orient", "center1", "center2", "center3", grip];
const filterTools: Item[] = [grip, "calc", "contour", "clip", "slice", "threshold", "subset", "glyph", "stream", "warp", "group", "extractBlock", grip, "ba", "oval", "squares", "plotTime", "plotLine", "plotSel", "snow", grip, "ruler"];
const viewTools: Item[] = ["camUndo", "camRedo", sep, "capture", sep, "two", "camZoom", sep, "selAdd", "selSub", "selToggle", sep, "selCells", "selPoints", "frustCells", "frustPts", "polyCells", "polyPts", "blocks", "blockGrey", "hovPoint", "hovCell", "hovPts", "qCell", "qPoint", "plus", "minus", "clear"];
const menus: [string, number][] = [["File", 0], ["Edit", 0], ["View", 0], ["Tools", 0], ["Sources", 0], ["Filters", 1], ["Macros", 0], ["Tools", 0], ["Window", 0], ["Catalyst", -1], ["Help", 0]];
const macros = ["macr_lign_coupe", "annotate_groups", "rosetteCustomViews", "ShowSalomeObject"];
const tree: [string, number][] = [["builtin:", 0], ["tmpcyza3hjw.med", 0], ["ExtractGroup1", 0], ["LINES", 1], ["POINTS", 1], ["SET GLYPH SIZE", 1], ["CUT_AXE_X", 2], ["CUT_AXE_Y", 2], ["CUT_AXE_Z", 2], ["CUT_DEPL_DX", 2], ["CUT_DEPL_DY", 2], ["CUT_DEPL_DZ", 2], ["CUT_DEPL_DRX", 2], ["CUT_DEPL_DRY", 2], ["CUT_DEPL_DRZ", 2]];
const keys = ["Clear", "(", ")", "iHat", "jHat", "kHat", "sin", "cos", "tan", "abs", "sqrt", "+", "asin", "acos", "atan", "ceil", "floor", "-", "sinh", "cosh", "tanh", "x^y", "exp", "*", "dot", "mag", "norm", "ln", "log10", "/"];

const icon = (name: string, cls = "i24") =>
  html`<svg class=${cls} viewBox="0 0 24 24" aria-hidden="true">${icons[name]}</svg>`;
const chevron = html`<svg class="chev" viewBox="0 0 8 5" aria-hidden="true"><path d="M0 0h8L4 5z" fill="currentColor"/></svg>`;

@customElement("app-root")
export class AppRoot extends LitElement {
  static styles = css`
    :host { display: flex; flex-direction: column; height: 100vh; overflow: hidden; background: #efefef; color: #101010; font: 14px/20px "Noto Sans", "Open Sans", sans-serif; }
    * { box-sizing: border-box; }
    button, input, select, textarea { font: inherit; color: inherit; margin: 0; }
    button { padding: 0; border: 0; background: none; display: flex; align-items: center; justify-content: center; }
    svg { display: block; flex: none; overflow: visible; }
    .big { font-size: 15px; }
    .i24 { width: 24px; height: 24px; }
    .i20 { width: 20px; height: 20px; }
    .i18 { width: 18px; height: 18px; }
    .i16 { width: 16px; height: 16px; }
    .i12 { width: 12px; height: 12px; }
    .chev { width: 8px; height: 5px; color: #555; }
    .raised { background: linear-gradient(#fefefe, #ececec); border: 1px solid #b1b1b1; border-radius: 3px; }

    .menubar { display: flex; height: 29px; flex: none; justify-content: space-between; border-bottom: 1px solid #d0d0d0; }
    .menus { display: flex; gap: 8px; }
    .menus button { height: 22px; padding: 0 4px 2px 5px; border-bottom: 1px solid #d9d9d9; }
    .menus u { text-underline-offset: 3px; }
    .menus button:first-child { padding-left: 4px; }
    .logo { width: 142px; color: #1e57cb; white-space: nowrap; display: flex; flex-direction: column; }
    .logo .words { display: flex; align-items: baseline; gap: 12px; height: 23px; line-height: 23px; font-size: 18px; }
    .logo b { font-size: 23px; }
    .logo svg { width: 142px; height: 4px; }

    .toolbar { display: flex; align-items: center; height: 39px; flex: none; background: linear-gradient(#f9f9f9, #eeeeee); border-bottom: 1px solid #b9b9b9; white-space: nowrap; }
    .toolbar.short { height: 38px; }
    .tool { width: 32px; height: 31px; flex: none; }
    .tool.wide { width: 33px; }
    .tool.on { background: #dcdcdc; border: 1px solid #a9a9a9; border-radius: 3px; }
    .sep { width: 6px; height: 19px; flex: none; border-left: 1px solid #d3d3d3; margin-left: 2px; margin-right: -2px; }
    .grip { flex: none; width: 5px; height: 17px; margin: 0 4px 0 8px; background: radial-gradient(circle at 1px 1px, #aaa 1px, transparent 1px) 0 0 / 3px 3px; }
    .toolbar > .grip:first-child { margin: 0 2px 0 0; }
    .combo { display: flex; align-items: center; gap: 4px; height: 27px; padding: 0 7px; flex: none; }
    .combo select { appearance: none; border: 0; background: none; flex: 1; min-width: 0; padding: 0; outline: 0; opacity: 1; }
    .combo.module { width: 161px; margin-right: 2px; }
    .combo.array { width: 160px; padding-left: 9px; gap: 8px; }
    .combo.component { width: 78px; margin-left: 6px; }
    .combo.component .chev { color: #c9c9c9; }
    .combo.repr { width: 183px; padding-left: 4px; }
    .dot { width: 5px; height: 5px; background: #e8b520; border: 1px solid #b28a2c; flex: none; }
    .field { background: #fff; border: 1px solid #b1b1b1; border-radius: 3px; padding: 0 2px; height: 27px; min-width: 0; outline: 0; }
    .time { width: 125px; margin-left: 3px; }
    .spin { display: flex; width: 37px; height: 26px; margin-left: 2px; border: 1px solid #b1b1b1; border-radius: 3px; color: #bdbdbd; }
    .spin input { width: 22px; border: 0; border-right: 1px solid #b1b1b1; background: #eee; padding: 0 0 0 4px; }
    .spin svg { width: 13px; height: 24px; }
    .macros { display: flex; gap: 16px; padding-left: 8px; }

    .main { display: flex; flex: 1; min-height: 0; }
    .dock { width: 348px; flex: none; display: flex; flex-direction: column; }
    .dock-title { display: flex; align-items: center; gap: 3px; height: 22px; padding-right: 2px; flex: none; }
    .dock-title h2 { font: inherit; margin: 0 auto 0 -1px; }
    .tree { margin: 0; padding: 1px 0 0; list-style: none; height: 645px; flex: none; background: #fff; border: solid #b5b5b5; border-width: 1px 1px 1px 0; }
    .tree li { display: flex; align-items: center; height: 23px; }
    .eye { width: 13px; height: 14px; margin-right: 7px; }
    .node { display: flex; align-items: center; height: 19px; padding-right: 4px; }
    .node.sel { background: #308cc6; outline: 1px solid #2a7db2; outline-offset: -1px; color: #eef6fb; }
    .node.sel .cube { opacity: .6; }
    .guide { height: 23px; }
    .node span { padding-left: 2px; }
    .split { height: 7px; width: 18px; margin: 0 auto; flex: none; background: radial-gradient(circle at 1px 1px, #aaa 1px, transparent 1px) 0 2px / 3px 7px repeat-x; }
    .tabs { display: flex; align-items: flex-end; height: 29px; flex: none; border-bottom: 1px solid #b5b5b5; }
    .tabs button { height: 27px; padding: 0 12px; border: 1px solid #b5b5b5; border-bottom: 0; border-radius: 3px 3px 0 0; background: #dedede; }
    .tabs button.cur { height: 30px; margin: 0 -1px -1px 0; border-left: 0; padding: 0 13px 0 7px; background: linear-gradient(#fafafa, #efefef); }
    .props { padding: 9px 9px 0 3px; display: flex; flex-direction: column; flex: 1; min-height: 0; gap: 6px; }
    .acts { display: grid; grid-template-columns: repeat(4, 1fr); gap: 2px; align-items: center; }
    .acts button { height: 27px; gap: 5px; }
    .acts button:disabled { color: #bababa; border-color: #c8c8c8; }
    .acts .short { height: 24px; }
    .find { display: flex; gap: 2px; align-items: center; }
    .find input { flex: 1; }
    .find input::placeholder { color: #7f7f7f; opacity: 1; }
    .find button { width: 24px; height: 23px; background: #dedede; }
    .scroll { display: flex; flex: 1; min-height: 0; overflow: hidden; }
    .form { flex: 1; min-width: 0; display: flex; flex-direction: column; }
    .edge { margin-left: 133px; height: 3px; flex: none; border: 1px solid #b1b1b1; border-top: 0; border-radius: 0 0 3px 3px; margin-bottom: 1px; }
    .check { display: flex; align-items: center; gap: 5px; height: 29px; flex: none; }
    .check input { appearance: none; width: 14px; height: 14px; border: 1px solid #b4b4b4; background: #fff; display: grid; place-items: center; }
    .check input:checked::before { content: ""; width: 5px; height: 9px; border: solid #111; border-width: 0 2px 2px 0; transform: rotate(40deg); }
    .row { display: grid; grid-template-columns: 133px 1fr; align-items: center; flex: none; height: 29px; white-space: nowrap; }
    .row.repl { grid-template-columns: 133px 1fr 23px; height: 31px; }
    .row.repl input { margin-right: 5px; }
    .row .raised { height: 24px; }
    .expr { flex: none; height: 29px; margin-top: 4px; border: 1px solid #b5b5b5; background: #fff; resize: none; padding: 4px; overflow: hidden; outline: 0; display: block; }
    .mini { display: flex; justify-content: flex-end; gap: 1px; flex: none; height: 23px; }
    .mini button { width: 23px; height: 23px; }
    .keys { display: grid; grid-template-columns: repeat(6, 1fr); flex: none; }
    .keys button { height: 26px; }
    .pair { display: grid; grid-template-columns: 1fr 1fr; flex: none; margin-bottom: 2px; }
    .pair button { height: 27px; padding: 0 4px; }
    .pair span { flex: 1; }
    .chev.tiny { width: 5px; height: 3px; }
    .bar { width: 15px; flex: none; display: flex; flex-direction: column; align-items: center; background: #e2e2e2; border-left: 1px solid #b5b5b5; }
    .bar div { width: 100%; display: grid; place-items: center; background: #fafafa; }
    .bar .end { height: 14px; flex: none; border: solid #b5b5b5; border-width: 0 0 1px; }
    .bar .end.down { border-width: 1px 0 0; margin-top: auto; background: #f4f4f4; }
    .bar .end.up svg { transform: rotate(180deg); }
    .bar .thumb { height: 47px; margin-top: 6px; border: solid #b5b5b5; border-width: 1px 0; }

    .work { flex: 1; min-width: 0; margin: 1px 0 0 6px; border: solid #a3a3a3; border-width: 2px 0 0 2px; display: flex; flex-direction: column; padding: 1px 0 0 1px; }
    .caption { display: flex; align-items: flex-start; gap: 6px; height: 32px; flex: none; }
    .caption h1 { flex: 1; margin: 0; height: 30px; font: inherit; line-height: 28px; text-align: center; color: #1f78bf; border: solid #b5b5b5; border-width: 1px 1px 0; border-radius: 3px 3px 0 0; background: linear-gradient(#f8f8f8, #efefef); }
    .caption button { width: 13px; height: 17px; margin-top: 7px; border-right: 0; border-radius: 3px 0 0 3px; overflow: hidden; justify-content: flex-start; padding-left: 2px; }
    .layouts { display: flex; align-items: flex-end; height: 28px; flex: none; border-bottom: 1px solid #b1b1b1; }
    .layouts > div { display: flex; align-items: center; height: 30px; margin-bottom: -1px; width: 125px; padding: 0 11px; gap: 4px; border: 1px solid #b1b1b1; border-bottom: 0; border-radius: 3px 3px 0 0; background: #fcfcfc; white-space: nowrap; }
    .layouts > button { width: 32px; height: 27px; background: #e9e9e9; border: 1px solid #b1b1b1; border-left: 0; border-bottom: 0; border-radius: 0 3px 0 0; }
    .viewbar { display: flex; align-items: center; height: 28px; flex: none; padding-left: 2px; }
    .viewbar .tool { width: 26px; height: 24px; }
    .viewbar .sep { height: 13px; margin: 0 -4px 0 4px; }
    .viewbar b { margin-left: auto; margin-right: 11px; text-decoration: underline; text-underline-offset: 4px; }
    .viewbar .raised { width: 26px; height: 25px; margin-right: 1px; }
    .viewbar .cut { margin-right: -2px; }
    .canvas { flex: 1; min-height: 0; margin-left: 2px; background: #fff; border: solid #0000f0; border-width: 2px 0 0 2px; position: relative; overflow: hidden; display: flex; justify-content: center; }
    .beam { width: 6px; margin: 97px 0 94px; background: #000; border-radius: 2px; }
    .axes { position: absolute; left: 119px; bottom: 107px; width: 100px; height: 110px; }
  `;

  private tools(items: Item[], active = "") {
    const size = items === viewTools ? "i18" : "i24";
    return items.map((it) =>
      typeof it === "string"
        ? html`<button class=${classMap({ tool: true, on: it === active })} aria-label=${it}>${icon(it, size)}</button>`
        : html`<span class=${it.kind}></span>`,
    );
  }

  private menu([label, at]: [string, number]) {
    return html`<button><span>${at < 0 ? label : html`${label.slice(0, at)}<u>${label[at]}</u>${label.slice(at + 1)}`}</span></button>`;
  }

  private node([label, level]: [string, number], i: number) {
    const last = i === tree.length - 1;
    const x = level * 18 - 8.5;
    const name = i === 0 ? "server" : "box";
    return html`<li>
      <svg class="eye" viewBox="0 0 24 24" aria-hidden="true">${i === 0 ? nothing : icons[i === 3 ? "eyeOn" : "eyeOff"]}</svg>
      <div class=${classMap({ node: true, sel: last, big: i > 2 })}>
        ${level
          ? html`<svg class="guide" width=${level * 18} viewBox="0 0 ${level * 18} 23" aria-hidden="true">
              <path d="M${x} 0V${last || i === 5 ? 11.5 : 23}M${x} 11.500h9" stroke=${last ? "#4d7f9f" : "#8a8a8a"} fill="none"/>
              ${i === 5 ? svg`<rect x="5.500" y="7.500" width="8" height="8" fill="#fff" stroke="#777"/><path d="M7 11.500h5" stroke="#222"/>` : nothing}
            </svg>`
          : nothing}
        <svg class="cube" width="18" height="23" viewBox="0 0 18 23" aria-hidden="true">
          ${level ? nothing : svg`<path d="M9.500 0v23" stroke="#8a8a8a"/>`}
          <g transform="translate(1 3) scale(.66)">${icons[name]}</g>
        </svg>
        <span>${label}</span>
      </div>
    </li>`;
  }

  render() {
    return html`
      <header class="menubar">
        <nav class="menus">${menus.map((m) => this.menu(m))}</nav>
        <div class="logo">
          <div class="words"><b>salome</b><span>MECA</span></div>
          <svg viewBox="0 0 142 4" aria-hidden="true">
            <circle cx="28" cy="2" r="2" fill="#ff5722"/><rect x="38" width="14" height="4" fill="#ff8a22"/><circle cx="58" cy="2" r="2" fill="#ff8a22"/><circle cx="67" cy="2" r="2" fill="#ff8a22"/>
            <circle cx="79" cy="2" r="2" fill="#ffb41e"/><circle cx="88" cy="2" r="2" fill="#ffb41e"/><rect x="94" width="14" height="4" fill="#ffb41e"/><circle cx="114" cy="2" r="2" fill="#ffb41e"/>
          </svg>
        </div>
      </header>

      <div class="toolbar">
        <span class="grip"></span>
        ${["newDoc", "open", "save"].map((n) => html`<button class="tool wide" aria-label=${n}>${icon(n)}</button>`)}
        <span class="sep"></span>
        ${["copy", "paste"].map((n) => html`<button class="tool wide" aria-label=${n}>${icon(n)}</button>`)}
        <span class="grip"></span>
        <label class="combo module raised">${icon("paravis", "i16")}<select aria-label="Module"><option>ParaViS</option></select>${chevron}</label>
        <span class="sep"></span>
        ${modules.map((n) => html`<button class=${classMap({ tool: true, wide: true, on: n === "paravis" })} aria-label=${n}>${icon(n, n === "paravis" || n === "gv" ? "i18" : "i20")}</button>`)}
        <span class="grip"></span>
        ${this.tools(mainTools)}
        <label for="time">Time:</label><input id="time" class="field time" .value=${"0"} />
        <div class="spin">
          <input aria-label="Time step" .value=${"0"} disabled />
          <svg viewBox="0 0 13 24" aria-hidden="true"><path d="M3 9h7L6.500 5zM3 15h7l-3.500 4z" fill="#d5d5d5"/></svg>
        </div>
      </div>

      <div class="toolbar">
        <span class="grip"></span>
        ${this.tools(colorTools)}
        <label class="combo array raised big"><span class="dot"></span><select aria-label="Coloring array"><option>CUT_DEPL_DRZ</option></select>${chevron}</label>
        <label class="combo component raised"><select aria-label="Component" disabled><option></option></select>${chevron}</label>
        <span class="grip"></span>
        <label class="combo repr raised"><select aria-label="Representation"><option>Wireframe</option></select>${chevron}</label>
        ${this.tools(cameraTools, "orient")}
        <div class="macros">${macros.map((m) => html`<button>${m}</button>`)}</div>
      </div>

      <div class="toolbar short">${this.tools(filterTools)}</div>

      <div class="main">
        <aside class="dock">
          <div class="dock-title"><h2>Pipeline Browser</h2><button aria-label="Float">${icon("floatBox", "i12")}</button><button aria-label="Close">${icon("closeBox", "i12")}</button></div>
          <ul class="tree">${tree.map((n, i) => this.node(n, i))}</ul>
          <div class="split"></div>
          <div class="tabs"><button class="cur">Properties</button><button>Information</button></div>
          <div class="dock-title"><h2>Properties</h2><button aria-label="Float">${icon("floatBox", "i12")}</button><button aria-label="Close">${icon("closeBox", "i12")}</button></div>
          <section class="props">
            <div class="acts">
              <button class="raised" disabled>${icon("apply", "i12")}Apply</button>
              <button class="raised" disabled>${icon("reset", "i16")}Reset</button>
              <button class="raised">${icon("cross", "i12")}Delete</button>
              <button class="raised short" aria-label="Help">${icon("help", "i16")}</button>
            </div>
            <div class="find"><input class="field" aria-label="Search" placeholder="Search ... (use Esc to clear text)" /><button class="raised" aria-label="Advanced">${icon("gear", "i16")}</button></div>
            <div class="scroll">
              <div class="form">
                <div class="edge"></div>
                <label class="check"><input type="checkbox" />Coordinate Results</label>
                <label class="check"><input type="checkbox" />Result Normals</label>
                <label class="check"><input type="checkbox" />Result TCoords</label>
                <div class="row"><label for="arr">Result Array Name</label><input id="arr" class="field big" .value=${"CUT_DEPL_DRZ"} /></div>
                <textarea class="expr big" aria-label="Expression" .value=${"CUT_DEPL_DRZ"}></textarea>
                <div class="mini">
                  <button class="raised" aria-label="Favourites">${icon("favs", "i16")}</button>
                  <button class="raised" aria-label="Save expression">${icon("folderDown", "i16")}</button>
                  <button class="raised" aria-label="Settings">${icon("gear", "i16")}</button>
                </div>
                <div class="keys">${keys.map((k) => html`<button class="raised">${k}</button>`)}</div>
                <div class="pair">${["Scalars", "Vectors"].map((k) => html`<button class="raised"><span>${k}</span><svg class="chev tiny" viewBox="0 0 8 5" aria-hidden="true"><path d="M0 0h8L4 5z" fill="currentColor"/></svg></button>`)}</div>
                <label class="check"><input type="checkbox" checked />Replace Invalid Results</label>
                <div class="row repl"><label for="rep">Replacement Value</label><input id="rep" class="field" .value=${"0"} /><button class="raised" aria-label="Restore">${icon("play", "i16")}</button></div>
              </div>
              <div class="bar"><div class="end up">${chevron}</div><div class="thumb"></div><div class="end down">${chevron}</div></div>
            </div>
          </section>
        </aside>

        <main class="work">
          <div class="caption"><h1>ParaView scene:1 - viewer:1</h1><button class="raised" aria-label="Close viewer">${icon("closeBox", "i12")}</button></div>
          <div class="layouts"><div>${icon("window", "i16")}<span>Layout #1</span><button aria-label="Close layout">${icon("closeBox", "i12")}</button></div><button>+</button></div>
          <div class="viewbar">
            ${this.tools(viewTools)}
            <b>RenderView1</b>
            <button class="raised" aria-label="Split horizontally">${icon("splitV", "i16")}</button>
            <button class="raised" aria-label="Split vertically">${icon("splitH", "i16")}</button>
            <button class="raised" aria-label="Maximize">${icon("window", "i20")}</button>
            <button class="raised cut" aria-label="Close view">${icon("closeBox", "i12")}</button>
          </div>
          <div class="canvas">
            <div class="beam"></div>
            <svg class="axes" viewBox="0 0 100 110" aria-hidden="true">
              <path d="M19 82V20" stroke="#ffff00" stroke-width="1.500"/>
              <path d="M13.500 20L19 6l5.500 14q-5 2-11 0z" fill="#dede14" stroke="#6b6b10" stroke-width=".7"/>
              <path d="M19 81.500h20" stroke="#000" stroke-width="2"/><path d="M37 81.500h44" stroke="#f04040" stroke-width="1.200"/>
              <path d="M80 76l15 6-15 5z" fill="#dc0a0a" stroke="#400" stroke-width="1"/>
              <path d="M22 5l7 7 7-7M29 12v8M24 65h12L25 81M84 66l12 16M96 66L84 82" fill="none" stroke="#000" stroke-width="2"/>
              <circle cx="19" cy="81.500" r="7" fill="#006000"/>
            </svg>
          </div>
        </main>
      </div>
    `;
  }
}
